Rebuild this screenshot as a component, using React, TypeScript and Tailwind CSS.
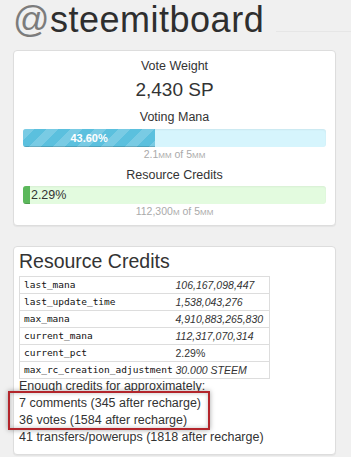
const sans = { fontFamily: '"Liberation Sans", Arial, sans-serif' };

const rcRows = [
  { key: "last_mana", value: "106,167,098,447", italic: true },
  { key: "last_update_time", value: "1,538,043,276", italic: true },
  { key: "max_mana", value: "4,910,883,265,830", italic: true },
  { key: "current_mana", value: "112,317,070,314", italic: true },
  { key: "current_pct", value: "2.29%", italic: false },
  { key: "max_rc_creation_adjustment", value: "30.000 STEEM", italic: true },
];

function Small({ children }: { children: React.ReactNode }) {
  return <span className="text-[8px]">{children}</span>;
}

export default function App() {
  return (
    <div
      className="relative w-[351px] h-[457px] overflow-hidden bg-[#f0f0f0] text-[#333]"
      style={sans}
    >
      {/* heading */}
      <div className="flex items-start pl-[13px] h-[50px]">
        <h1 className="text-[36px] leading-[40px] text-[#2e2e2e] tracking-[0.5px]">
          <span className="text-[#7c7c7c]">@</span>steemitboard
        </h1>
        <div className="flex-1 ml-[12px] mt-[31px] h-px bg-[#e6e6e6]" />
      </div>

      {/* vote weight card */}
      <div className="ml-[13px] w-[323px] rounded-[4px] border border-[#dddddd] bg-white shadow-[0_1px_1px_rgba(0,0,0,0.05)] px-[9px] pt-[7px] pb-[6px] text-center">
        <div className="text-[12.5px] leading-[17.5px]">Vote Weight</div>
        <div className="mt-[2px] text-[19px] leading-[24px]">2,430 SP</div>
        <div className="mt-[7px] text-[12.5px] leading-[17.5px]">Voting Mana</div>
        <div className="mt-[3px] flex h-[18px] overflow-hidden rounded-[3px] bg-[#d6f5fd] shadow-[inset_0_1px_2px_rgba(0,0,0,0.06)]">
          <div className="flex w-[43.6%] items-center justify-center bg-[#5bc0de] bg-[linear-gradient(135deg,rgba(255,255,255,.18)_25%,transparent_25%,transparent_50%,rgba(255,255,255,.18)_50%,rgba(255,255,255,.18)_75%,transparent_75%,transparent)] [background-size:24px_24px] shadow-[inset_0_-1px_0_rgba(0,0,0,0.15)] text-[11px] font-bold text-white">
            43.60%
          </div>
        </div>
        <div className="mt-[1px] text-[10.5px] leading-[12px] text-[#aaaaaa]">
          2.1<Small>MM</Small> of 5<Small>MM</Small>
        </div>
        <div className="mt-[5px] text-[12.5px] leading-[17.5px]">Resource Credits</div>
        <div className="mt-[1px] flex h-[18px] items-center overflow-hidden rounded-[3px] bg-[#e3fbdf] shadow-[inset_0_1px_2px_rgba(0,0,0,0.05)]">
          <div className="h-full w-[2.29%] bg-[#5cb85c] shadow-[inset_0_-1px_0_rgba(0,0,0,0.15)]" />
          <span className="ml-[1px] text-[12.5px] leading-[18px] text-[#333]">2.29%</span>
        </div>
        <div className="mt-[1px] text-[10.5px] leading-[12px] text-[#aaaaaa]">
          112,300<Small>M</Small> of 5<Small>MM</Small>
        </div>
      </div>

      {/* resource credits card */}
      <div className="ml-[13px] mt-[20px] w-[323px] rounded-[4px] border border-[#dddddd] bg-white shadow-[0_1px_1px_rgba(0,0,0,0.05)] px-[5px] pt-[3px] pb-[8px]">
        <h2 className="text-[19.5px] leading-[22px]">Resource Credits</h2>
        <table className="mt-[4px] w-[251px] border-collapse border border-[#dddddd]">
          <tbody>
            {rcRows.map((row) => (
              <tr key={row.key} className="h-[17px] border-t border-[#dddddd]">
                <td
                  className="w-[156px] pl-[4px] text-[9.5px] leading-[16px] text-[#111]"
                  style={{ fontFamily: '"DejaVu Sans Mono", "Liberation Mono", monospace' }}
                >
                  {row.key}
                </td>
                <td
                  className={
                    row.italic
                      ? "text-[10.5px] leading-[16px] italic"
                      : "text-[10.5px] leading-[16px]"
                  }
                >
                  {row.value}
                </td>
              </tr>
            ))}
          </tbody>
        </table>
        <div className="-mt-[1px] text-[12.5px] leading-[17px]">
          <div>Enough credits for approximately:</div>
          <div>7 comments (345 after recharge)</div>
          <div>36 votes (1584 after recharge)</div>
          <div>41 transfers/powerups (1818 after recharge)</div>
        </div>
      </div>

      {/* highlight annotation */}
      <div className="absolute left-[8px] top-[391px] h-[39px] w-[202px] border-2 border-[#b3252b] shadow-[0_0_5px_rgba(0,0,0,0.35),inset_0_0_4px_rgba(0,0,0,0.25)]" />
    </div>
  );
}
